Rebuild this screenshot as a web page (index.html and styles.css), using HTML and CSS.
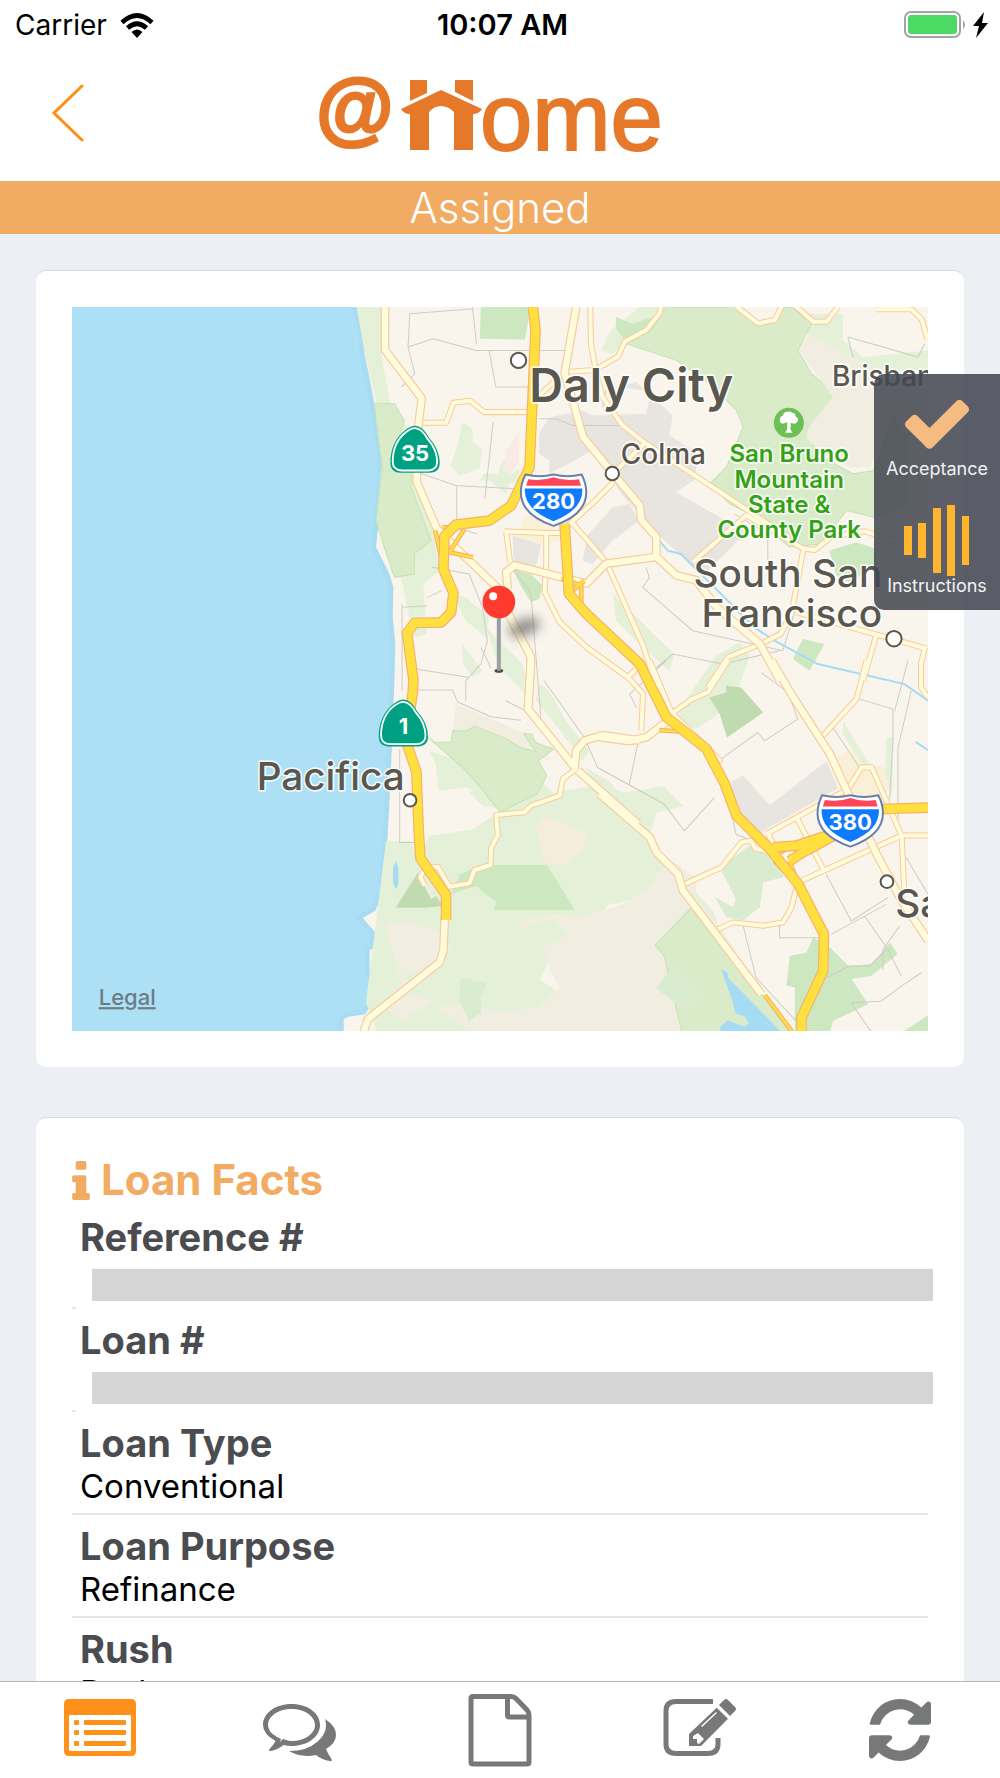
FILE: index.html
```html
<!DOCTYPE html>
<html lang="en">
<head>
  <meta charset="utf-8">
  <meta name="viewport" content="width=device-width, initial-scale=1">
  <title>@Home - Assigned</title>
  <link rel="stylesheet" href="styles.css">
</head>
<body>

  <div class="status-bar">
    <div class="carrier">
      <span>Carrier</span>
      <svg width="34" height="25" viewBox="0 0 34 25">
        <path d="M2 9.500Q17-4.500 32 9.500M7.500 15Q17 6.500 26.500 15" fill="none" stroke="#000" stroke-width="4.600"/>
        <path d="M11.500 19Q17 14 22.500 19L17 25z"/>
      </svg>
    </div>
    <div class="time">10:07 AM</div>
    <div class="battery">
      <svg width="86" height="28" viewBox="0 0 86 28">
        <rect x="1" y="1" width="55" height="25" rx="6" fill="#fff" stroke="#a3a3a6" stroke-width="2"/>
        <rect x="4" y="4" width="49" height="19" rx="3" fill="#4cd964"/>
        <path d="M59 9q4 4.500 0 9z" fill="#a3a3a6"/>
        <path d="M80 1L69 15h6l-3 12 12-15h-6z"/>
      </svg>
    </div>
  </div>

  <header>
    <button class="back" aria-label="Back">
      <svg width="32" height="58" viewBox="0 0 32 58"><path d="M30 2L2 29l28 27"/></svg>
    </button>
    <svg class="logo" width="342" height="80" viewBox="318 73 342 80" role="img" aria-label="@Home">
      <text class="logo-at" x="315" y="136">@</text>
      <path d="M410 80h17v13l-17 8zM455 80h18v21l-18-9z"/>
      <path d="M441 90l41 19q-3 5-9 5v36h-19v-38q-6-6-13-6t-12 6v38h-19v-36q-6 0-9-5z"/>
      <text class="logo-ome" x="480" y="150">ome</text>
    </svg>
  </header>

  <div class="band">Assigned</div>

  <main>
    <section class="card map-card">
      <!-- map units are a third of a pixel -->
      <svg class="map" viewBox="0 0 2565 2170">
        <defs>
          <path id="coast" d="M853 0l23 79v60l15 70 15 80 15 90 10 70-5 130-15 140 40 80 12 40-2 90 8 80-3 110-7 190-8 180-7 130-10 130-25 60-38 22 38 43-2 47-15 6v72l19 25-4 45-28 50-50 8-15 7v40"/>
          <g id="roads">
            <g transform="translate(801 -21)">
              <path d="M752 20l2 110 14 80 20 80 60 85 70 55 230 150 90 60 110 72"/>
              <path d="M690 215l75-5 70-40 20-45 65-35 40-50 5-25"/>
              <path d="M245 368h75l22-60 50-6 42 34h130"/>
              <path d="M600 285l65-60M820 520l100-95M495 693l125 5h40l100-90 60-60M500 695l12 90M620 700v90l-5 85 45 90 80 75 130 95M700 670l95 110M800 785l110 250 60 180"/>
            </g>
            <g transform="translate(1581 -21)">
              <path d="M410 20l65 50 50-10 20-40M590 20l50 45h40l35-45M830 28h105l30 30 18 60"/>
              <path d="M280 785l160-140M440 645l170 100 35 4 50-40 100-16 190 65M610 750l-35 190-32 60-58 30-100 40-60 90M590 935l390 110M830 1000l-40 140M975 1040l-12 50v70l20 30"/>
            </g>
            <g transform="translate(501 1059)">
              <path d="M1010 325l-40 30-10 50-85 30-20 20-85 8 5 60-20 40-2 50-48 15-15 40-60 10-35-60-20 3-25 15-7 14 13 25"/>
            </g>
            <g transform="translate(1581 1059)">
              <path d="M-40 -40l125 90 45 50-5 110M85 50l25-25M150 0l65 155M800 0l-30 115-100 110M385 0l-60 95-50 22-60 43"/>
              <path d="M500 520L745 385l40-65h30l90 205 8 170M905 525h80M605 660l300-135M590 470l85 165M505 520l20 40M255 670l110-50 60-75 30-5 10 22 35 10M355 805l45-20 90 10 60-10 25-45 15-60M220 160l140 140-28 20"/>
            </g>
          </g>
          <g id="main-roads">
            <g transform="translate(801 -21)">
              <path d="M137 20v130l110 145-15 120v130l60 140 70 70 120 115 30 80 62 120-7 150"/>
              <path d="M710 20l-35 200 30 100 25 90 90 110 80 95 5 45 45 50v60l-150 20-60 60-215-55-25 20 5 50"/>
            </g>
            <g transform="translate(1581 -21)">
              <path d="M170 770l60 55 60 15 60 80 130 110 60 110"/>
            </g>
            <g transform="translate(501 1059)">
              <path d="M875 0l-10 145 140 175M1005 325l5-55 25-30 55-16 110 16M1015 330l180 160"/>
              <path d="M616 770l-4 100-12 35-215 170-12 40"/>
            </g>
            <g transform="translate(1581 1059)">
              <path d="M515 0l65 110 110 170 55 120 85 180 75 140 80 120"/>
              <path d="M0 230l90 12 50-12 60-45M0 400l150 130 20 45 65 65 15 50 235 310"/>
            </g>
          </g>
          <g id="highways">
            <path d="M1381 0l8 70-18 410-55 115-65 45-100 12-35 35-3 100 30 70-7 58-30 30-80 2-22 30 19 140-2 40-22 140 33 95 7 180 5 80 77 110v75"/>
            <path d="M1476 650l13 209 52 60 160 150 20 40 60 120 120 95 55 105 35 95 100 100 85 105 77 150-2 110-65 140v43"/>
            <path d="M2101 1619l70-5 90-30M2150 1660l41-26 90-49M2400 1505l165-5"/>
          </g>
          <g id="ramps">
            <path d="M1088 669l18 80M1110 660h60M1176 665l-45 70 70 15M1466 814l60 20v60M1500 850l35-30"/>
            <path d="M2110 1640l40-20M2105 1660l70 70M2150 1660l25 65M2076 2062l82 110M1760 1268l60 4"/>
          </g>
          <path id="state-shield" d="M74 0q-12 0-28 12C14 36 0 72 0 112q0 26 28 29h92q28-3 28-29 0-40-32-76Q96 0 74 0z"/>
          <path id="interstate" d="M14 0q42 10 84 0 42 10 84 0 14 26 14 54 0 66-98 100Q0 120 0 54 0 26 14 0z"/>
          <filter id="soft" x="-50%" y="-100%" width="200%" height="300%"><feGaussianBlur stdDeviation="16"/></filter>
        </defs>

        <rect width="2565" height="2172" fill="#aee0f5"/>
        <use href="#coast" class="shallows"/>
        <path class="land" d="M853 0l23 79v60l15 70 15 80 15 90 10 70-5 130-15 140 40 80 12 40-2 90 8 80-3 110-7 190-8 180-7 130-10 130-25 60-38 22 38 43-2 47-15 6v72l19 25-4 45-28 50-50 8-15 7v40H2565V0z"/>

        <!-- parks and open land -->
        <g class="open">
          <path d="M853 0h75l5 100 10 40-20-20 30 170 60 80-20 60 80 200 30 160-50 40 10 150-40 10-35-170-55-100-18-120 15-140-20-180-38-170z"/>
          <path d="M1170 345l30 20v40l30 20-10 60-60 20-25-30 20-60zM1290 460h20v45l30-20v40l-30 5-10 30-50-40h-30l15-20h40zM1140 860l40 10 70 60-10 60-60-50zM1170 1010l60 80-30 20-30-45zM1240 960l110 110 20 100-90-90z"/>
          <path d="M941 1600h70l30 40 30-55 130-20 90-60-60-10-40-40 30-20 40-50 60 20 60-10 60 60 120-20 100 20 110-20 60 60-80 20-20 70-70 80 10 90-70 40-20 80-100 20 60 30-30 40-80-10-30 60 60 40-60 40-20 60-70-10-90 50-40 70-90 30-30 60 20 100 80 30v10H811v-40l50-10 50-80-20-140 20-60-30-80z"/>
          <path d="M1070 1330l120 40 80 110-90-40-80 10-10-80zM1400 1130l30 20 50 90 70 90-20 30-90-120-50-60zM1540 1380l70 40 50 60-90-40zM1581 1550l110 10 50 40 60 80 120 130 60 160-30 30-100-180-110-60-120 30z"/>
          <path d="M1820 1205l110-160 70-40 30 40-40 120-60 60-60 40-50-20zM1620 860l185 180-15 50-100-90-60-60zM2310 1240l80 130-10 20-70-110zM2440 1290h22l-5 180-20-60-30-10 30-20z"/>
          <path d="M1700 0h80l-60 60-100 80-35-10 30-60zM2200 20h110v80l60 50 195-20v60h-150l-60 70-60-30-20-100-70-40z"/>
        </g>
        <g class="beige">
          <path d="M1150 1190l120 50 110 50 60 70-120-30-120-60-60 20zM940 1850l60-10 100 30 40 60-60 50-80 20 20 60 60 20-90 60-70-50 70-60z"/>
          <path d="M1330 1840l120-20 60 10 140-40 90-60 90 10 70 60 90 130-120 240H1200l-110-70 90-10 100 20 120-10 60-60-30-60-20-60 80-40-50-50-90 30z"/>
          <path d="M1750 1700l50-40 70 50v80l-100 40-50-10z"/>
        </g>
        <path d="M1390 1560l30-35 50 20 70 30-5 50-60 50-60-10-10-50z" fill="#f4ecdd"/>
        <g class="urban">
          <path d="M1640 240l50-15 110 100-10 60 80 50v80l-60 40 210 120-130 130-140-130-100-110-40-60-45-80-50 30-85 45v-40l-30-20v-60l30-50 100-20 30 15 160-5 10-40-20-30z"/>
          <path d="M1320 685l85 25-10 50-20 50-50-35zM1540 690l80-90 50-10 30 50-80 60-60 70-30-10 10-50zM1975 1425l36-22 80 90 170-132 35 80-210 120-40 30-55-80z"/>
        </g>
        <g class="town">
          <path d="M1405 510l60-15 70 20-10 30-90-5zM1360 620l80 40 30 40-70 10-65-20zM2290 1350l50-28 30 60 60-10 20 70-60 50-60-30z"/>
        </g>
        <path d="M1300 430l40-55v90l-30 40-15-20z" fill="#faeae6"/>
        <g class="park">
          <path d="M1661 110l75-40 45-70h200l75 50 50-10 20-40h30l60 50-40 80 40 70 70 60-5 60-60 80 10 40 110 60 60-10 60-160 40 60v200l-100 40-80-20-80 100-90 10-120-100-60-30-60-60 50-50 50-120-20-50-80-80-100-70z"/>
          <path d="M906 290h60l30 50-20 60 40 60v80l60 160-50 40v60l-60 10-30-90-25-80 20-150-15-110z"/>
          <path d="M1066 1289l20 15h50l5-35 40 2 25-15 90 35 50 30 45 12-38-55 25 2 10 25 55 20-45 35 25 45-30 55-110 53-85-105-30-30z"/>
          <path d="M1748 1911l107-110 60 70 255 315h-340l-55-240z"/>
        </g>
        <path class="beige" d="M2210 80l-30 50 100 140-75 95-3 30 60 50 70 35h60l60-150-60-150-130-70-40-20z"/>
        <g class="green">
          <path d="M1225 0h150l-18 98-135-3zM1630 30l50 20 60-20-30 40-50 35-30-40zM1320 785l60 20 30 30-10 40-25 10-30-50zM2270 730l80-25 60 20v50l-80 50-40-20zM2190 995l65 15-45 80-50-35z"/>
          <path d="M1136 1759l77-25 13 15 47 35-10 23h243l-82-135h-203l-60 30z"/>
          <path d="M2151 1944l50-10 20-45 50 30 55 55 70-5 55-65 23 35-78 65-60 10 50 75-105 50-10 33h-105v-133l-25-5zM2490 2172l75-50v50z"/>
        </g>
        <g class="meadow">
          <path d="M1941 1679l90-65 90 45 10 50-60 15-10 75-50 39-50-10-35-60 55 30 8-25z"/>
          <path d="M1165 2010l80 15-20 40v50l-35 25-30-60zM1750 2040l40-50 50 15 50 60-30 30-60-15z"/>
        </g>
        <g class="wood">
          <path d="M970 1800l66-105 40 80 15-10 20 30-50 5zM1910 1170l50-15v-20l45 5 66 75-108 75-22-70z"/>
        </g>
        <g class="lake">
          <path d="M970 1660l8 20v50l-8 15-8-20v-45zM1945 1983l20 12v15l60 60 100 102h-182v-15l20-20 50 20 15-10-10-20-30-10-10-40z"/>
        </g>
        <path class="creek" d="M1760 700l25 30 40 10 90 90 130 130 60 40 130 70 260 60 70 50M2528 1303l37 25"/>

        <path class="minor" d="M1012 20l190-15M1012 20l-5 100 20 80-40 40M1007 120l75-25 130 35h270M1200 0l12 110M1250 130l20 110h110v160l-10 180M1020 490l130 45 190 10M1153 535v125l60 20M1262 345l-25 230M1400 335h50l50 20h150M1080 780l110 20 40 100 15 100-20 70-45 50v60M1600 250l-10 50M989 900l75-5M1064 870l45-20M989 890v260M1030 1085l160 25M1030 1148h110l15 35 100 45 90 10M1225 1020l30 60M1320 780l55 80 30 370M1300 1180l80 40M982 1325v280h50M1720 780l10 30-20 30 150 130 270 60 40-130M1740 1090l60-50 150 30 170-40M1781 1060l-110 100 20 40M1415 1120l120 170 40 90 200 110 60 80 90-100M1695 1310l-25 120M1945 1355l110-80 20 25 100-65-30-80-80-60M2360 1175l100 30v100l-10 170M2505 1060l-40 150M2515 1150l-40 170v250M2280 1260l80 120M1950 1400l40 180 50 20M2500 1650l65 110M2260 1700l75 140 110-70M2275 1880l165-90M2010 1850l40 160 120 130M2120 1845v45h145M2375 1825l70 100 40 80M2480 1855l-50 70v60M2250 2015l80-40h60l50-50M2335 2085l90-5 60-45 60-40M2335 2085l60 87M2325 90l210 60 20-40M2325 90l15 60M2085 760v-80l-100-60"/>

        <use href="#roads" class="casing"/>
        <use href="#roads" class="road"/>
        <use href="#main-roads" class="casing wide"/>
        <use href="#main-roads" class="road wide"/>
        <use href="#ramps" class="ramp-casing"/>
        <use href="#ramps" class="ramp"/>
        <use href="#highways" class="highway-casing"/>
        <use href="#highways" class="highway"/>

        <!-- road shields -->
        <g transform="translate(954 356)">
          <use href="#state-shield" fill="#00a182"/>
          <use href="#state-shield" class="shield-line" transform="translate(7 7) scale(.9)"/>
          <text class="shield-text" x="74" y="105">35</text>
        </g>
        <g transform="translate(919 1176)">
          <use href="#state-shield" fill="#00a182"/>
          <use href="#state-shield" class="shield-line" transform="translate(7 7) scale(.9)"/>
          <text class="shield-text" x="74" y="105">1</text>
        </g>
        <g transform="translate(1345 502)">
          <use href="#interstate" class="shield-base"/>
          <path d="M22 14q40 7 76-6 36 13 76 6l6 20H16z" fill="#ff4659"/>
          <path d="M12 42h172q4 62-86 98Q8 104 12 42z" fill="#107aff"/>
          <text class="shield-text" x="98" y="104">280</text>
        </g>
        <g transform="translate(2234 1463)">
          <use href="#interstate" class="shield-base"/>
          <path d="M22 14q40 7 76-6 36 13 76 6l6 20H16z" fill="#ff4659"/>
          <path d="M12 42h172q4 62-86 98Q8 104 12 42z" fill="#107aff"/>
          <text class="shield-text" x="98" y="104">380</text>
        </g>

        <g class="dots">
          <circle cx="1338" cy="160" r="23"/>
          <circle cx="1619" cy="499" r="20"/>
          <circle cx="2463" cy="994" r="23"/>
          <circle cx="1013" cy="1478" r="19"/>
          <circle cx="2442" cy="1722" r="19"/>
        </g>

        <g class="place">
          <text class="city" x="1676" y="286">Daly City</text>
          <text class="town-name" x="1772" y="471">Colma</text>
          <text class="town-name start" x="2277" y="238">Brisbane</text>
          <text class="big-town" x="2145" y="838">South San</text>
          <text class="big-town" x="2157" y="960">Francisco</text>
          <text class="big-town" x="775" y="1448">Pacifica</text>
          <text class="big-town start" x="2467" y="1827">San Bruno</text>
        </g>
        <circle cx="2148" cy="347" r="45" fill="#6cc055"/>
        <path d="M2143 345l-14 5q-10-3-8-12 0-10 9-12 2-12 14-12 8-3 14 3 10 0 10 10 10 5 7 13-2 9-12 10l-9-3-1 20 6 10h-22l6-10z" fill="#fff"/>
        <g class="park-name">
          <text x="2149" y="465">San Bruno</text>
          <text x="2149" y="541">Mountain</text>
          <text x="2149" y="616">State &amp;</text>
          <text x="2149" y="691">County Park</text>
        </g>
        <text class="legal" x="80" y="2092">Legal</text>

        <!-- pin -->
        <ellipse cx="1355" cy="960" rx="50" ry="26" transform="rotate(-20 1355 960)" fill="#555" opacity=".6" filter="url(#soft)"/>
        <ellipse cx="1279" cy="1090" rx="13" ry="6" fill="#4a4a4a"/>
        <rect x="1273" y="920" width="12" height="170" fill="#9b9ea4"/>
        <circle cx="1279" cy="884" r="49" fill="#ff3b30"/>
        <circle cx="1262" cy="867" r="12" fill="#fff"/>
      </svg>
    </section>

    <section class="card">
      <h2>
        <svg width="18" height="39" viewBox="576 128 640 1408"><path d="M1216 1344v128q0 26-19 45t-45 19h-512q-26 0-45-19t-19-45v-128q0-26 19-45t45-19h64v-384h-64q-26 0-45-19t-19-45v-128q0-26 19-45t45-19h384q26 0 45 19t19 45v576h64q26 0 45 19t19 45zM1088 192v192q0 26-19 45t-45 19h-256q-26 0-45-19t-19-45v-192q0-26 19-45t45-19h256q26 0 45 19t19 45z"/></svg>
        Loan Facts
      </h2>
      <dl>
        <div class="fact hidden-fact">
          <dt>Reference #</dt>
          <dd><span class="redacted"></span></dd>
        </div>
        <div class="fact hidden-fact">
          <dt>Loan #</dt>
          <dd><span class="redacted"></span></dd>
        </div>
        <div class="fact">
          <dt>Loan Type</dt>
          <dd>Conventional</dd>
        </div>
        <div class="fact">
          <dt>Loan Purpose</dt>
          <dd>Refinance</dd>
        </div>
        <div class="fact">
          <dt>Rush</dt>
          <dd>Rush</dd>
        </div>
      </dl>
    </section>
  </main>

  <aside class="actions">
    <button>
      <svg width="64" height="49" viewBox="121 340 1550 1184" fill="#f5bc82"><path d="M1671 566q0 40-28 68l-724 724-136 136q-28 28-68 28t-68-28l-136-136-362-362q-28-28-28-68t28-68l136-136q28-28 68-28t68 28l294 295 656-657q28-28 68-28t68 28l136 136q28 28 28 68z"/></svg>
      <span class="gap">Acceptance</span>
    </button>
    <button>
      <svg width="66" height="71" viewBox="0 0 66 71" fill="#ffb62e"><path d="M0 21h8v29H0zM14 18h8v35h-8zM29 3h8v65h-8zM43 0h8v71h-8zM58 11h7v49h-7z"/></svg>
      <span>Instructions</span>
    </button>
  </aside>

  <nav>
    <button class="active" aria-label="Details">
      <svg width="76" height="76" viewBox="0 0 76 76">
        <path fill-rule="evenodd" d="M7 7h62q5 0 5 5v47q0 5-5 5H7q-5 0-5-5V12q0-5 5-5zM8 23q-1 0-1 1v34q0 1 1 1h60q1 0 1-1V24q0-1-1-1z"/>
        <rect x="12" y="28" width="5" height="5" rx="1"/><rect x="22" y="28" width="42" height="5" rx="1"/>
        <rect x="12" y="38" width="5" height="5" rx="1"/><rect x="22" y="38" width="42" height="5" rx="1"/>
        <rect x="12" y="49" width="5" height="5" rx="1"/><rect x="22" y="49" width="42" height="5" rx="1"/>
      </svg>
    </button>
    <button aria-label="Messages">
      <svg width="76" height="76" viewBox="0 0 76 76">
        <path fill-rule="evenodd" d="M29.500 12C46 12 58 21.500 58 33S46 54 29.500 54q-4 0-8-1-6 5-13 6-2 0-1-2 4-4 6-8Q1 42 1 33C1 21.500 13 12 29.500 12zm0 5C16 17 6 24.500 6 33q0 7 9 12l4 2-1 3 3-3 3 1q3 1 5.500 1C43 49 53 41.500 53 33S43 17 29.500 17z"/>
        <path d="M63 27q11 7 11 16 0 8-10 14 2 5 5 9 2 4-1 3-8-1-14-6-15 3-27-4 18 0 28-9 12-10 8-23z"/>
      </svg>
    </button>
    <button aria-label="Documents">
      <svg width="76" height="76" viewBox="0 0 76 76"><path class="line" d="M11 4.500h38q3 0 5 2L65 18q2 2 2 5v47q0 2-2 2H11q-2 0-2-2V6.500q0-2 2-2zM45.500 5v18q0 2 2 2H66"/></svg>
    </button>
    <button aria-label="Edit">
      <svg width="76" height="76" viewBox="0 0 76 76">
        <path class="line" d="M51 9.500H14Q4 9.500 4 19v33q0 9.500 10 9.500h32q10 0 10-9.500v-6"/>
        <path fill-rule="evenodd" d="M27 54V42l27.700-26.300L66 26.700 39 54zM31 44v3h4v4l2 1 5-5-6-6zM40 35l15-14-1-1-15 14z"/>
        <path d="M57 13l5-5q2-2 4 0l7 7q2 2 0 4l-5 5z"/>
      </svg>
    </button>
    <button aria-label="Refresh">
      <svg width="76" height="76" viewBox="-46 -46 1884 1884"><path d="M1639 1056q0 5-1 7-64 268-268 434.500t-478 166.500q-146 0-282.500-55t-243.500-157l-129 129q-19 19-45 19t-45-19-19-45v-448q0-26 19-45t45-19h448q26 0 45 19t19 45-19 45l-137 137q71 66 161 102t187 36q134 0 250-65t186-179q11-17 53-117 8-23 30-23h192q13 0 22.500 9.500t9.500 22.500zM1664 256v448q0 26-19 45t-45 19h-448q-26 0-45-19t-19-45 19-45l138-138q-148-137-349-137-134 0-250 65t-186 179q-11 17-53 117-8 23-30 23h-199q-13 0-22.500-9.500t-9.500-22.500v-7q65-268 270-434.500t480-166.500q146 0 284 55.500t245 156.500l130-129q19-19 45-19t45 19 19 45z"/></svg>
    </button>
  </nav>

</body>
</html>
```
FILE: styles.css
```css
* {
  box-sizing: border-box;
}
body {
  margin: 0;
  height: 100vh;
  display: flex;
  flex-direction: column;
  position: relative;
  overflow: hidden;
  background-color: #fff;
  color: #000;
  font-family: Inter, "Liberation Sans", sans-serif;
}
button {
  padding: 0;
  border: none;
  background: none;
  font-family: inherit;
  cursor: pointer;
}
svg {
  display: block;
}

/* status bar and header */
.status-bar {
  display: grid;
  grid-template-columns: 1fr auto 1fr;
  align-items: center;
  height: 45px;
  padding: 5px 10px 0 15px;
  font-size: 28px;
  line-height: 40px;
}
.carrier {
  display: flex;
  align-items: center;
  gap: 13px;
}
.time {
  font-size: 29px;
  font-weight: 600;
}
.battery {
  justify-self: end;
}
header {
  display: grid;
  grid-template-columns: 1fr auto 1fr;
  align-items: center;
  height: 136px;
  padding: 0 74px 0 52px;
}
.back {
  justify-self: start;
}
.back path {
  fill: none;
  stroke: #ff9014;
  stroke-width: 3;
  stroke-linecap: round;
}
.logo {
  overflow: visible;
  fill: #e6782a;
  stroke: #e6782a;
  stroke-width: 0;
}
.logo-at {
  font: italic bold 79px "Liberation Sans", sans-serif;
  stroke-width: 3;
}
.logo-ome {
  font: 94px "Liberation Sans", sans-serif;
  stroke-width: 2;
}
.band {
  background-color: #f1ab63;
  color: #fff;
  text-align: center;
  font-size: 42px;
  font-weight: 300;
  line-height: 53px;
}

/* cards */
main {
  flex: 1;
  min-height: 0;
  overflow: hidden;
  padding: 36px;
  background-color: #eceff4;
}
.card {
  padding: 36px;
  margin-bottom: 50px;
  background-color: #fff;
  border-top: 1px solid #d5d8dc;
  border-radius: 10px;
}
h2 {
  display: flex;
  align-items: center;
  gap: 11px;
  margin: 0;
  color: #f1ab63;
  fill: #f1ab63;
  font-size: 42px;
  font-weight: 700;
  line-height: 52px;
}
dl {
  margin: 0;
}
.fact {
  padding: 9px 0 6px 8px;
  border-bottom: 2px solid #e6e6e8;
}
.hidden-fact {
  border-image: linear-gradient(to right, #e6e6e8 6px, transparent 6px) 2;
}
dt {
  color: #4b4c50;
  font-size: 38px;
  font-weight: 700;
  line-height: 44px;
}
dd {
  margin: 0;
  height: 42px;
  font-size: 33px;
  line-height: 42px;
}
.redacted {
  display: block;
  height: 42px;
  margin: 0 -5px 0 12px;
  border-top: 10px solid #fff;
  background-color: #d5d5d5;
}

/* map */
.map {
  width: 100%;
  height: auto;
}
.land {
  fill: #f9f4ec;
}
.shallows {
  fill: none;
  stroke: #9dd3ec;
  stroke-width: 30;
  opacity: 0.3;
}
.open {
  fill: #e4f1d8;
}
.beige {
  fill: #f1eee1;
}
.urban {
  fill: #e8e4e0;
}
.town {
  fill: #faf0d8;
}
.park {
  fill: #daebca;
  stroke: #c3e4b4;
  stroke-width: 3;
}
.green {
  fill: #cde8c0;
}
.meadow {
  fill: #d9ecd0;
}
.wood {
  fill: #c0dbb0;
}
.lake {
  fill: #a5dbf3;
}
.creek {
  fill: none;
  stroke: #a5dbf3;
  stroke-width: 6;
}
.minor {
  fill: none;
  stroke: #cfccc7;
  stroke-width: 3;
}
.casing, .road, .highway, .highway-casing, .ramp, .ramp-casing {
  fill: none;
  stroke-linejoin: round;
}
.casing {
  stroke: #f6cc9c;
  stroke-width: 18;
}
.road {
  stroke: #fffbdb;
  stroke-width: 12;
}
.casing.wide {
  stroke-width: 26;
}
.road.wide {
  stroke-width: 19;
}
.highway-casing {
  stroke: #f7b169;
  stroke-width: 32;
}
.highway {
  stroke: #ffe03f;
  stroke-width: 25;
}
.ramp-casing {
  stroke: #f7b169;
  stroke-width: 14;
}
.ramp {
  stroke: #ffe03f;
  stroke-width: 7;
}
.shield-line {
  fill: none;
  stroke: #fff;
  stroke-width: 6;
}
.shield-base {
  fill: #fff;
  stroke: #6880ad;
  stroke-width: 6;
}
.shield-text {
  fill: #fff;
  font-size: 66px;
  font-weight: 700;
  text-anchor: middle;
}
.dots {
  fill: #fff;
  stroke: #5a574f;
  stroke-width: 6;
}
.place, .park-name {
  fill: #5a574f;
  stroke: #fffc;
  stroke-width: 10;
  stroke-linejoin: round;
  paint-order: stroke;
  font-weight: 600;
  text-anchor: middle;
}
.city {
  font-size: 140px;
}
.big-town {
  font-size: 116px;
  font-weight: 500;
}
.start {
  text-anchor: start;
}
.town-name {
  font-size: 84px;
  font-weight: 500;
}
.park-name {
  fill: #34a116;
  font-size: 72px;
}
.legal {
  fill: #6b7c84;
  font-size: 66px;
  font-weight: 500;
  text-decoration: underline;
}

/* floating actions */
.actions {
  position: absolute;
  top: 374px;
  right: 0;
  display: flex;
  flex-direction: column;
  gap: 26px;
  padding: 26px 12px 14px;
  background-color: rgba(68, 71, 81, 0.87);
  border-radius: 10px 0 0 10px;
}
.actions button {
  display: flex;
  flex-direction: column;
  align-items: center;
  color: #f2f2f3;
  font-size: 18px;
  line-height: 20px;
}
.gap {
  margin-top: 10px;
}

/* tabs */
nav {
  display: flex;
  height: 97px;
  border-top: 1px solid #b4b5b8;
  background-color: #fff;
}
nav button {
  flex: 1;
  display: flex;
  align-items: center;
  justify-content: center;
  fill: #77787a;
}
nav .active {
  fill: #ff9019;
}
.line {
  fill: none;
  stroke: #77787a;
  stroke-width: 5;
}
```
